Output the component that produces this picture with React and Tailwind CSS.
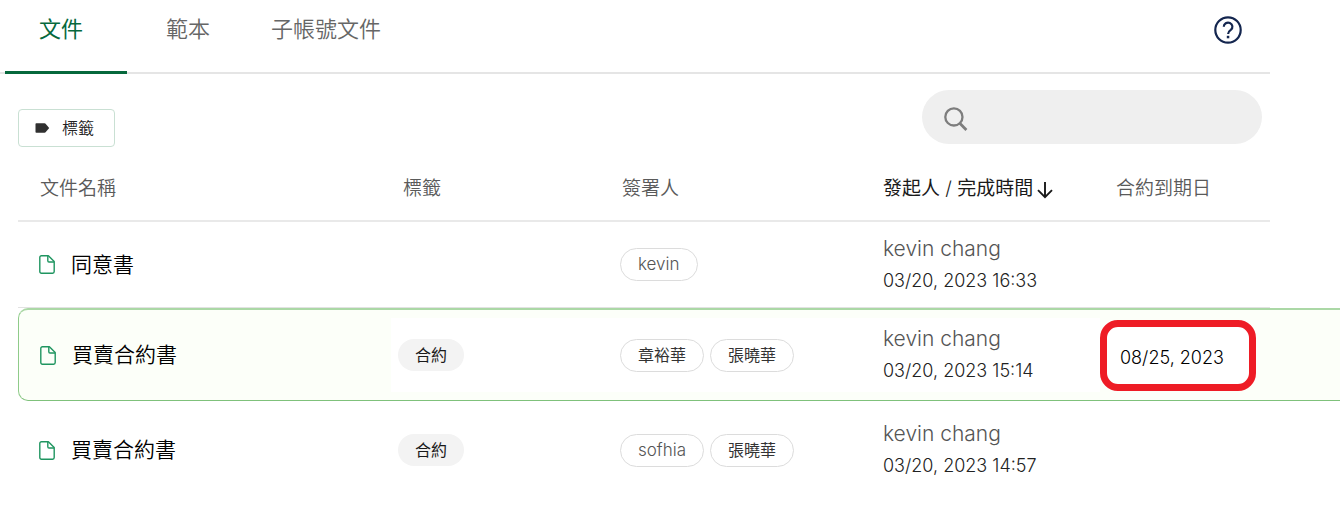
import React from "react";

const tabs = [
  { label: "文件", active: true },
  { label: "範本" },
  { label: "子帳號文件", compact: true },
];

const documents = [
  { id: 1, name: "同意書", tags: [], signers: ["kevin"], owner: "kevin chang", time: "03/20, 2023 16:33", expiry: "" },
  {
    id: 2,
    name: "買賣合約書",
    tags: ["合約"],
    signers: ["章裕華", "張曉華"],
    owner: "kevin chang",
    time: "03/20, 2023 15:14",
    expiry: "08/25, 2023",
    selected: true,
  },
  { id: 3, name: "買賣合約書", tags: ["合約"], signers: ["sofhia", "張曉華"], owner: "kevin chang", time: "03/20, 2023 14:57", expiry: "", last: true },
];

function FileIcon() {
  return (
    <svg className="h-[19px] w-4 shrink-0" viewBox="0 0 16 19" fill="none" stroke="#1f9560" strokeWidth="1.4" strokeLinejoin="round" aria-hidden="true">
      <path d="M2.4 .8H9.4L15.2 6.6V16.6A1.6 1.6 0 0 1 13.6 18.2H2.4A1.6 1.6 0 0 1 .8 16.6V2.4A1.6 1.6 0 0 1 2.4 .8Z" />
      <path d="M8.8 1V5.8A1.2 1.2 0 0 0 10 7H15" />
    </svg>
  );
}

function HelpIcon() {
  return (
    <svg className="size-7" viewBox="0 0 28 28" fill="none" stroke="#14264f" strokeWidth="2.2" aria-hidden="true">
      <circle cx="14" cy="14" r="12.7" />
      <path d="M9.8 10.8A4.3 4.1 0 1 1 16.8 13.9C15.1 15.1 14.1 15.9 14.1 18" />
      <rect x="12.8" y="19.8" width="2.5" height="2.5" fill="#14264f" stroke="none" />
    </svg>
  );
}

function SearchIcon() {
  return (
    <svg className="size-6 shrink-0" viewBox="0 0 24 24" fill="none" stroke="#7d7d7d" strokeWidth="2.3" aria-hidden="true">
      <circle cx="9.9" cy="9.9" r="8.6" />
      <path d="M15.8 16.3L22.4 23" strokeWidth="2.8" />
    </svg>
  );
}

function ArrowDownIcon() {
  return (
    <svg className="h-[18px] w-4" viewBox="0 0 16 18" fill="none" stroke="#1a1a1a" strokeWidth="1.9" aria-hidden="true">
      <path d="M8 1V16M1 9.2L8 16.2L15 9.2" />
    </svg>
  );
}

function Row({ doc }) {
  const edge = doc.selected
    ? "border-t-2 border-b border-t-[#abd8a6] border-b-[#7fc17b] bg-[#fcfff9]"
    : doc.last
      ? ""
      : "border-b border-[#e2e2e2]";
  const height = doc.selected ? "h-[93px]" : doc.last ? "h-[98px]" : "h-[86px]";
  const patch = doc.selected ? "bg-white h-[74px]" : "";
  return (
    <tr className={height}>
      <td className={`p-0 ${edge} ${doc.selected ? "rounded-l-[10px] border-l border-l-[#8fcb8a]" : ""}`}>
        <div className="flex items-center gap-4 pl-[21px]">
          <FileIcon />
          <a href="#document" className="text-[21px] leading-8 font-[350] text-black">{doc.name}</a>
        </div>
      </td>
      <td className={`p-0 ${edge}`}>
        <div className={`flex items-center pl-[7px] ${patch}`}>
          {doc.tags.map((tag) => (
            <span key={tag} className="rounded-full bg-[#f3f3f3] px-[17px] text-base leading-8 text-[#1a1a1a]">{tag}</span>
          ))}
        </div>
      </td>
      <td className={`p-0 ${edge}`}>
        <div className={`flex items-center gap-[6px] pl-[10px] ${patch}`}>
          {doc.signers.map((s) => (
            <span
              key={s}
              className={`rounded-full border border-[#dcdcdc] bg-white px-[17px] leading-[31px] ${
                /^[a-z]/.test(s) ? "text-[17px] font-light text-[#555]" : "text-base text-[#333]"
              }`}
            >
              {s}
            </span>
          ))}
        </div>
      </td>
      <td className={`p-0 ${edge}`}>
        <div className={`flex flex-col justify-center pl-[10px] leading-8 font-light whitespace-nowrap ${patch}`}>
          <span className="text-[21px] text-[#555]">{doc.owner}</span>
          <span className="text-[18px] text-[#222]">{doc.time}</span>
        </div>
      </td>
      <td className={`p-0 ${edge}`}>
        {doc.expiry && (
          <div className="flex h-[71px] w-[156px] items-center rounded-[18px] border-[7px] border-[#ee1c25] bg-white pt-1 pl-[13px] text-[18px] font-light whitespace-nowrap text-black">
            {doc.expiry}
          </div>
        )}
      </td>
      <td className={`p-0 ${doc.selected ? edge : ""}`} />
    </tr>
  );
}

export default function App() {
  const th = "h-[75px] border-b-2 border-[#e9e9e9] p-0 pt-3 text-left text-[19px] whitespace-nowrap";
  return (
    <main className="min-h-screen overflow-hidden bg-white font-['Inter','Noto_Sans_CJK_TC',sans-serif]">
      <header className="mr-[70px] flex h-[74px] items-stretch justify-between border-b-2 border-[#e5e5e5]">
        <nav className="-mb-[2px] flex pl-[5px]">
          {tabs.map((tab) => (
            <a
              key={tab.label}
              href="#tab"
              className={`flex items-start pt-[13px] text-[22px] leading-8 ${
                tab.active
                  ? "border-b-3 border-[#06683c] pr-[44px] pl-[34px] text-[#06683c]"
                  : `font-[350] text-[#666] ${tab.compact ? "px-[22px]" : "px-[39px]"}`
              }`}
            >
              {tab.label}
            </a>
          ))}
        </nav>
        <button type="button" aria-label="說明" className="mt-4 mr-7 self-start">
          <HelpIcon />
        </button>
      </header>

      <div className="mr-[78px] ml-[18px] flex items-start justify-between pt-4">
        <button type="button" className="mt-[19px] flex h-[38px] w-[97px] items-center gap-3 rounded border border-[#c9e0d3] pl-4 text-base font-[350] text-[#222]">
          <svg className="h-[10px] w-[15px]" viewBox="0 0 15 10" fill="#303030" aria-hidden="true">
            <path d="M1.3 .3H9.5Q10.3 .3 10.8 .9L14.2 5L10.8 9.1Q10.3 9.7 9.5 9.7H1.3Q.5 9.7 .5 8.9V1.1Q.5 .3 1.3 .3Z" />
          </svg>
          標籤
        </button>
        <label className="flex h-[54px] w-[340px] items-center gap-3 rounded-full bg-[#efefef] px-[22px] pt-1">
          <SearchIcon />
          <input type="search" aria-label="搜尋" className="min-w-0 flex-1 bg-transparent text-base outline-none" />
        </label>
      </div>

      <div className="pl-[18px]">
        <table className="w-full table-fixed border-separate border-spacing-0">
          <colgroup>
            <col />
            <col className="w-[219px]" />
            <col className="w-[263px]" />
            <col className="w-[227px]" />
            <col className="w-[170px]" />
            <col className="w-[70px]" />
          </colgroup>
          <thead>
            <tr>
              <th className={`${th} pl-[22px] font-[350] text-[#5a5a5a]`}>文件名稱</th>
              <th className={`${th} pl-3 font-[350] text-[#5a5a5a]`}>標籤</th>
              <th className={`${th} pl-3 font-[350] text-[#5a5a5a]`}>簽署人</th>
              <th className={`${th} pl-[10px] font-normal text-[#1a1a1a]`}>
                <button type="button" className="flex items-center gap-1">
                  <span>
                    發起人 <span className="font-light">/</span> 完成時間
                  </span>
                  <ArrowDownIcon />
                </button>
              </th>
              <th className={`${th} pl-4 font-[350] text-[#5a5a5a]`}>合約到期日</th>
              <td />
            </tr>
          </thead>
          <tbody>
            {documents.map((doc) => (
              <Row key={doc.id} doc={doc} />
            ))}
          </tbody>
        </table>
      </div>
    </main>
  );
}
